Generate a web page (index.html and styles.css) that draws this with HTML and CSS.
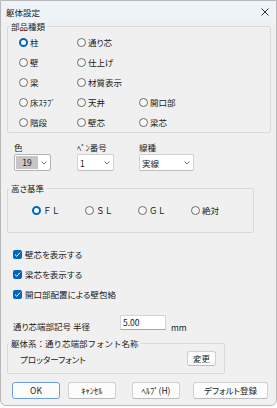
FILE: index.html
```html
<!DOCTYPE html>
<html lang="ja">
<head>
  <meta charset="UTF-8" />
  <title>躯体設定</title>
  <link rel="stylesheet" href="styles.css">
</head>
<body>
  <div class="window">
    <div class="titlebar">
      <span class="title">躯体設定</span>
      <span class="close">
        <svg width="8" height="8" viewBox="0 0 8 8"><path d="M0.5 0.5 L7.5 7.5 M7.5 0.5 L0.5 7.5" stroke="#333" stroke-width="1" fill="none"/></svg>
      </span>
    </div>

    <div class="content">
      <!-- 部品種類 -->
      <fieldset class="group group-parts">
        <legend>部品種類</legend>
        <div class="parts-grid">
          <label class="radio checked"><span class="dot"></span>柱</label>
          <label class="radio"><span class="dot"></span>通り芯</label>
          <span></span>
          <label class="radio"><span class="dot"></span>壁</label>
          <label class="radio"><span class="dot"></span>仕上げ</label>
          <span></span>
          <label class="radio"><span class="dot"></span>梁</label>
          <label class="radio"><span class="dot"></span>材質表示</label>
          <span></span>
          <label class="radio"><span class="dot"></span>床ｽﾗﾌﾞ</label>
          <label class="radio"><span class="dot"></span>天井</label>
          <label class="radio"><span class="dot"></span>開口部</label>
          <label class="radio"><span class="dot"></span>階段</label>
          <label class="radio"><span class="dot"></span>壁芯</label>
          <label class="radio"><span class="dot"></span>梁芯</label>
        </div>
      </fieldset>

      <div class="selects">
        <div class="field field-color">
          <div class="field-label">色</div>
          <div class="combo combo-color">
            <span class="swatch">19</span>
            <svg class="chevron" width="6" height="4" viewBox="0 0 6 4"><polyline points="0.5,0.5 3,3 5.5,0.5" stroke="#777" fill="none"/></svg>
          </div>
        </div>
        <div class="field field-pen">
          <div class="field-label">ﾍﾟﾝ番号</div>
          <div class="combo combo-pen">
            <span>1</span>
            <svg class="chevron" width="6" height="4" viewBox="0 0 6 4"><polyline points="0.5,0.5 3,3 5.5,0.5" stroke="#777" fill="none"/></svg>
          </div>
        </div>
        <div class="field field-line">
          <div class="field-label">線種</div>
          <div class="combo combo-line">
            <span>実線</span>
            <svg class="chevron" width="6" height="4" viewBox="0 0 6 4"><polyline points="0.5,0.5 3,3 5.5,0.5" stroke="#777" fill="none"/></svg>
          </div>
        </div>
      </div>

      <!-- 高さ基準 -->
      <fieldset class="group group-height">
        <legend>高さ基準</legend>
        <div class="height-row">
          <label class="radio checked"><span class="dot"></span><span class="wide">ＦＬ</span></label>
          <label class="radio"><span class="dot"></span><span class="wide">ＳＬ</span></label>
          <label class="radio"><span class="dot"></span><span class="wide">ＧＬ</span></label>
          <label class="radio"><span class="dot"></span>絶対</label>
        </div>
      </fieldset>

      <div class="checks">
        <label class="check"><span class="box"><svg width="7" height="7" viewBox="0 0 7 7"><polyline points="1,3.6 2.8,5.3 6,1.6" stroke="#fff" stroke-width="1" fill="none"/></svg></span>壁芯を表示する</label>
        <label class="check"><span class="box"><svg width="7" height="7" viewBox="0 0 7 7"><polyline points="1,3.6 2.8,5.3 6,1.6" stroke="#fff" stroke-width="1" fill="none"/></svg></span>梁芯を表示する</label>
        <label class="check"><span class="box"><svg width="7" height="7" viewBox="0 0 7 7"><polyline points="1,3.6 2.8,5.3 6,1.6" stroke="#fff" stroke-width="1" fill="none"/></svg></span>開口部配置による壁包絡</label>
      </div>

      <div class="radius-row">
        <span class="radius-label">通り芯端部記号 半径</span>
        <span class="text-input">5.00</span>
        <span class="unit">mm</span>
      </div>

      <!-- フォント -->
      <fieldset class="group group-font">
        <legend class="wide">躯体系：通り芯端部フォント名称</legend>
        <div class="font-row">
          <span>プロッターフォント</span>
          <button class="btn btn-small">変更</button>
        </div>
      </fieldset>

      <div class="buttons">
        <button class="btn btn-ok">OK</button>
        <button class="btn">ｷｬﾝｾﾙ</button>
        <button class="btn btn-help">ﾍﾙﾌﾟ(H)</button>
        <button class="btn btn-default">デフォルト登録</button>
      </div>
    </div>
  </div>
</body>
</html>
```

FILE: styles.css
```css
* {
  box-sizing: border-box;
}

body {
  margin: 0;
  background: #ffffff;
  font-family: "Noto Sans CJK JP", "Noto Sans", sans-serif;
  font-size: 8.5px;
  font-feature-settings: "palt";
  color: #1a1a1a;
}

.wide {
  font-feature-settings: normal;
}

.window {
  width: 277px;
  height: 406px;
  border: 1px solid #b8b8b8;
  border-radius: 0 0 6px 6px;
  background: #f0f0f0;
  overflow: hidden;
}

.titlebar {
  height: 21px;
  background: #eef3f9;
  display: flex;
  align-items: center;
  justify-content: space-between;
  padding: 0 7px 0 5px;
}

.close {
  display: flex;
}

.content {
  padding: 0 5px 0 6px;
}

/* group boxes */
.group {
  margin: 0;
  padding: 0;
  border: 1px solid #d9d9d9;
  border-radius: 2px;
  min-inline-size: 0;
}

.group legend {
  margin-left: 1px;
  padding: 0 2px;
  line-height: 8px;
}

.group-parts {
  width: 264px;
}

.group-height {
  width: 247px;
  margin-top: 13px;
}

.group-font {
  width: 218px;
  margin-top: 7px;
}

/* radios */
.radio {
  display: flex;
  align-items: center;
  gap: 2px;
  height: 20px;
  white-space: nowrap;
}

.radio .dot {
  width: 9px;
  height: 9px;
  border: 1px solid #6b6b6b;
  border-radius: 50%;
  background: #f8f8f8;
  flex: 0 0 auto;
}

.radio.checked .dot {
  border: 2.5px solid #0067c0;
  background: #ffffff;
}

.parts-grid {
  display: grid;
  grid-template-columns: 58px 62px auto;
  padding: 2px 0 0 11px;
}

.height-row {
  display: grid;
  grid-template-columns: 53px 53px 53px auto;
  padding: 8px 0 12px 24px;
}

.height-row .radio {
  gap: 2px;
}

/* selects */
.selects {
  display: flex;
  padding-left: 7px;
  margin-top: 8px;
}

.field-label {
  line-height: 12px;
  white-space: nowrap;
}

.field-color {
  width: 63px;
}

.field-pen {
  width: 62px;
}

.combo {
  margin-top: 1px;
  height: 17px;
  display: flex;
  align-items: center;
  justify-content: space-between;
  background: #ffffff;
  border: 1px solid #d0d0d0;
  border-bottom-color: #bdbdbd;
  border-radius: 2px;
  padding: 0 3px 0 2px;
}

.combo-color {
  width: 37px;
  padding-left: 1px;
  border-color: #b4b4b4;
}

.combo-pen {
  width: 37px;
}

.combo-line {
  width: 55px;
}

.swatch {
  width: 22px;
  height: 13px;
  line-height: 13px;
  text-align: center;
  background: #c6c6c6;
}

/* checkboxes */
.checks {
  margin-top: 11px;
  padding-left: 6px;
}

.check {
  display: flex;
  align-items: center;
  gap: 3px;
  height: 20px;
}

.check .box {
  width: 9px;
  height: 9px;
  border-radius: 2px;
  background: #0067c0;
  display: flex;
  align-items: center;
  justify-content: center;
}

/* radius */
.radius-row {
  display: flex;
  align-items: flex-start;
  height: 17px;
  margin-top: 11px;
  padding-left: 6px;
}

.radius-label {
  width: 107px;
  margin-top: 5px;
  line-height: 12px;
}

.text-input {
  width: 46px;
  height: 15px;
  background: #ffffff;
  border: 1px solid #d4d4d4;
  border-bottom-color: #a8a8a8;
  padding: 1px 0 0 2px;
  line-height: 11px;
}

.unit {
  margin: 6px 0 0 5px;
  line-height: 12px;
}

/* font group */
.font-row {
  display: flex;
  align-items: center;
  justify-content: space-between;
  padding: 4px 8px 7px 12px;
}

/* buttons */
.btn {
  font: inherit;
  font-weight: normal;
  color: #1a1a1a;
  background: #fcfcfc;
  border: 1px solid #d0d0d0;
  border-bottom-color: #bcbcbc;
  border-radius: 3px;
  height: 17px;
  width: 48px;
  padding: 0;
  line-height: 15px;
  text-align: center;
}

.btn-small {
  width: 29px;
  height: 15px;
  line-height: 13px;
}

.btn-ok {
  border-color: #6f9fd8;
}

.buttons {
  display: flex;
  gap: 8px;
  margin-top: 8px;
  padding-left: 5px;
}

.btn-help {
  margin-left: 8px;
}

.btn-default {
  width: 75px;
  margin-left: 5px;
}
```
